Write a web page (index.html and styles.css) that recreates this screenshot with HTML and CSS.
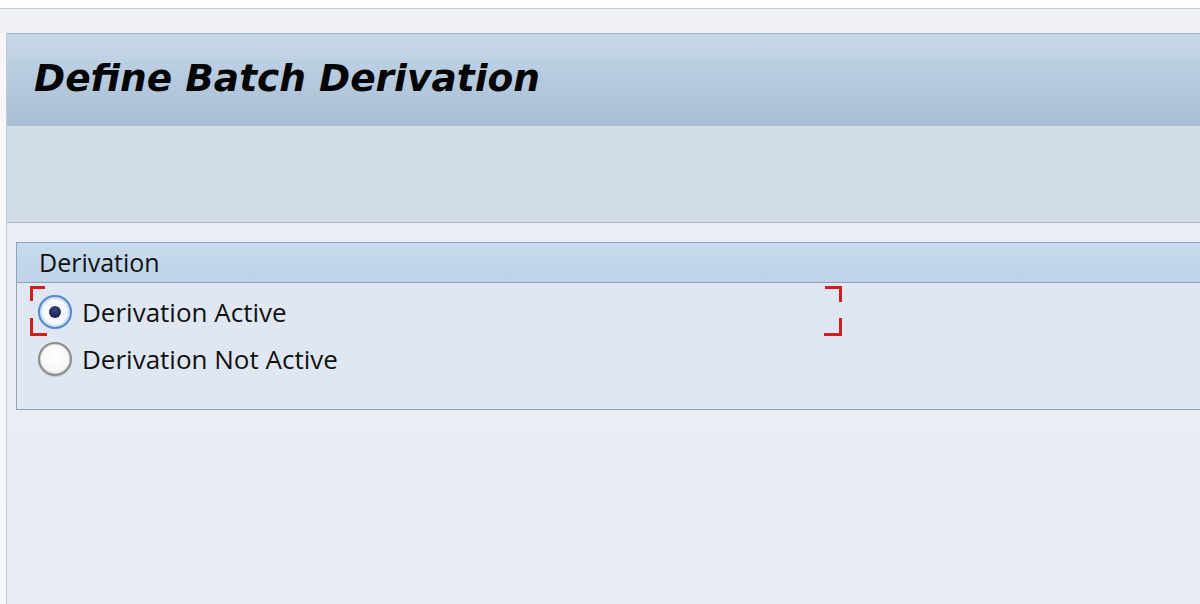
FILE: index.html
```html
<!DOCTYPE html>
<html>
<head>
<meta charset="utf-8">
<link rel="stylesheet" href="styles.css">
</head>
<body>
<div class="topstrip"></div>
<div class="band"></div>
<div class="frame">
  <div class="main">
    <div class="titlebar"><h1 class="title">Define Batch Derivation</h1></div>
    <div class="toolbar"></div>
    <div class="content">
      <div class="group">
        <div class="group-head">Derivation</div>
        <div class="group-body">
          <div class="row">
            <span class="radio on"><span class="dot"></span></span>
            <span class="label">Derivation Active</span>
            <span class="focus">
              <span class="c tl"></span><span class="c bl"></span><span class="c tr"></span><span class="c br"></span>
            </span>
          </div>
          <div class="row">
            <span class="radio"></span>
            <span class="label">Derivation Not Active</span>
          </div>
        </div>
      </div>
    </div>
  </div>
</div>
</body>
</html>
```

FILE: styles.css
```css
html, body {
  margin: 0;
  padding: 0;
  width: 1200px;
  height: 604px;
  overflow: hidden;
  background: #f6f7fa;
  font-family: "Open Sans", "DejaVu Sans", sans-serif;
}
.topstrip {
  height: 8px;
  background: #fdfdfe;
  border-bottom: 1px solid #c4c9d2;
}
.band {
  height: 24px;
  background: #eff1f7;
}
.frame {
  padding-left: 6px;
  background: #f6f7fa;
}
.main {
  border-left: 1px solid #c3cad4;
  height: 571px;
  background: #e9edf4;
  display: flex;
  flex-direction: column;
}
.titlebar {
  height: 93px;
  flex: none;
  border-top: 1px solid #9eb0c4;
  background: linear-gradient(to bottom, #c9d9ea 0%, #b7cbdf 45%, #a8bed5 100%);
  display: flex;
  align-items: center;
  padding-left: 27px;
  box-sizing: border-box;
}
.title {
  margin: 0;
  margin-top: -4px;
  font-family: "DejaVu Sans", sans-serif;
  font-weight: bold;
  font-style: italic;
  font-size: 37.5px;
  color: #050505;
}
.toolbar {
  height: 96px;
  flex: none;
  background: #d1dce7;
  border-bottom: 1px solid #a9b6c4;
}
.content {
  flex: 1;
  padding-top: 19px;
  padding-left: 9px;
  background: linear-gradient(to bottom, #eaeef5, #e8ecf3);
}
.group {
  border: 1px solid #90a3b9;
  border-right: none;
  background: #dfe8f2;
}
.group-head {
  height: 39px;
  background: linear-gradient(to bottom, #c9dbee, #bdd2e8);
  border-bottom: 1px solid #8ea2b9;
  padding-left: 22px;
  font-size: 25px;
  line-height: 39px;
  color: #111;
}
.group-body {
  padding-top: 5px;
  padding-bottom: 27px;
}
.row {
  position: relative;
  height: 47px;
  display: flex;
  align-items: center;
  padding-left: 21px;
}
.label {
  margin-left: 10px;
  font-size: 26px;
  color: #111;
  line-height: 1;
}
.radio {
  width: 34px;
  height: 34px;
  box-sizing: border-box;
  border-radius: 50%;
  border: 2px solid #8c8c8c;
  background: radial-gradient(circle at 50% 40%, #ffffff 0%, #f6f6f6 60%, #e3e3e3 100%);
  box-shadow: inset 0 0 0 1px #d8d8d8, 0 1px 1px rgba(0,0,0,0.15);
  display: flex;
  align-items: center;
  justify-content: center;
}
.radio.on {
  border: 2px solid #5587cd;
  box-shadow: inset 0 0 0 2px #cfe0f5, 0 0 1px rgba(40,90,170,0.4);
  background: radial-gradient(circle at 50% 45%, #ffffff 0%, #f1f5fb 70%, #dbe6f4 100%);
}
.dot {
  width: 12px;
  height: 12px;
  border-radius: 50%;
  background: radial-gradient(circle at 50% 35%, #3b4680 0%, #1b2150 70%);
}
.focus {
  position: absolute;
  left: 13px;
  top: -2px;
  width: 812px;
  height: 50px;
  pointer-events: none;
}
.c {
  position: absolute;
  border: 0 solid #d21d1d;
}
.tl { left: 0; top: 0; border-top-width: 3px; border-left-width: 3px; width: 12px; height: 12px; }
.bl { left: 0; bottom: 0; border-bottom-width: 3px; border-left-width: 3px; width: 14px; height: 15px; }
.tr { right: 0; top: 0; border-top-width: 3px; border-right-width: 3px; width: 14px; height: 13px; }
.br { right: 0; bottom: 0; border-bottom-width: 3px; border-right-width: 3px; width: 15px; height: 15px; }
```
